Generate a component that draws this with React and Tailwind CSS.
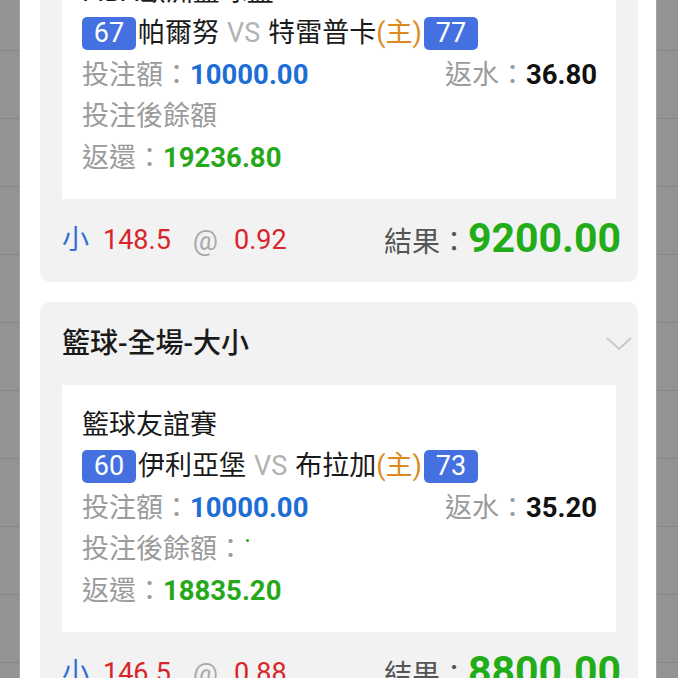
import React from "react";

const FONT = { fontFamily: 'Roboto, "Noto Sans CJK TC", "Noto Sans", sans-serif' };

function Strip({ side }) {
  const rows = Array.from({ length: 9 });
  const cls =
    side === "left"
      ? "w-[20px] shrink-0 bg-[#939393] border-r border-[#a3a3a3] flex flex-col"
      : "flex-1 bg-[#939393] border-l border-[#a3a3a3] flex flex-col";
  return (
    <div className={cls}>
      <div className="h-[51px] shrink-0 border-b border-[#858585]" />
      {rows.map((_, i) => (
        <div key={i} className="h-[68px] shrink-0 border-b border-[#858585]" />
      ))}
    </div>
  );
}

function Badge({ children }) {
  return (
    <span className="inline-flex items-center justify-center h-[33px] w-[54px] rounded-[5px] bg-[#4571e0] text-white text-[27px] leading-none align-middle">
      {children}
    </span>
  );
}

function Card({ league, home, away, homeScore, awayScore, stake, rebate, afterDot, ret, line, odds, result }) {
  return (
    <div className="rounded-[10px] bg-[#f2f2f2]">
      <div className="h-[83px] flex items-center justify-between pl-[22px] pr-[6px]">
        <span className="text-[28px] font-medium text-[#1a1a1a]">籃球-全場-大小</span>
        <svg width="26" height="14" viewBox="0 0 26 14">
          <path d="M1 1 L13 12 L25 1" fill="none" stroke="#c9c9c9" strokeWidth="2" />
        </svg>
      </div>
      <div className="mx-[22px] bg-white px-[20px] py-[20px] text-[27px] leading-[41px]">
        <div className="text-[#1a1a1a]">{league}</div>
        <div className="flex items-center text-[#1a1a1a]">
          <Badge>{homeScore}</Badge>
          <span className="ml-[2px]">{home}</span>
          <span className="text-[#b2b2b2] mx-[8px]">VS</span>
          <span>{away}</span>
          <span className="text-[#dc8a1e] mr-[2px]">(主)</span>
          <Badge>{awayScore}</Badge>
        </div>
        <div className="flex justify-between">
          <span>
            <span className="text-[#9b9b9b]">投注額：</span>
            <span className="font-bold text-[#1c6dd6] text-[27.5px]">{stake}</span>
          </span>
          <span className="mr-[-1px]">
            <span className="text-[#9b9b9b]">返水：</span>
            <span className="font-bold text-[#111] text-[27.5px]">{rebate}</span>
          </span>
        </div>
        <div className="text-[#9b9b9b]">
          {afterDot ? (
            <>
              投注後餘額：<span className="inline-block w-[3px] h-[3px] rounded-full bg-[#2aa81c] align-top mt-[10px] ml-[2px]" />
            </>
          ) : (
            "投注後餘額"
          )}
        </div>
        <div>
          <span className="text-[#9b9b9b]">返還：</span>
          <span className="font-bold text-[#26a81a] text-[27.5px]">{ret}</span>
        </div>
      </div>
      <div className="h-[83px] flex items-center justify-between pl-[22px] pr-[17px]">
        <div className="text-[27px] flex items-center">
          <span className="text-[#2f6fd6]">小</span>
          <span className="text-[#d8252b] ml-[14px]">{line}</span>
          <span className="text-[#aaaaaa] ml-[22px] text-[28px]">@</span>
          <span className="text-[#d8252b] ml-[16px]">{odds}</span>
        </div>
        <div className="flex items-baseline">
          <span className="text-[28px] text-[#555]">結果：</span>
          <span className="text-[41px] font-bold text-[#22ac18] leading-none">{result}</span>
        </div>
      </div>
    </div>
  );
}

export default function App() {
  return (
    <div className="w-[678px] h-[678px] overflow-hidden flex bg-white" style={FONT}>
      <Strip side="left" />
      <div className="w-[636px] shrink-0 bg-white pl-[20px] pr-[18px]">
        <div className="-mt-[131px] flex flex-col gap-[20px]">
          <Card
            league="FIBA歐洲籃球盃"
            home="帕爾努"
            away="特雷普卡"
            homeScore="67"
            awayScore="77"
            stake="10000.00"
            rebate="36.80"
            ret="19236.80"
            line="148.5"
            odds="0.92"
            result="9200.00"
          />
          <Card
            league="籃球友誼賽"
            home="伊利亞堡"
            away="布拉加"
            homeScore="60"
            awayScore="73"
            stake="10000.00"
            rebate="35.20"
            afterDot
            ret="18835.20"
            line="146.5"
            odds="0.88"
            result="8800.00"
          />
        </div>
      </div>
      <Strip side="right" />
    </div>
  );
}
